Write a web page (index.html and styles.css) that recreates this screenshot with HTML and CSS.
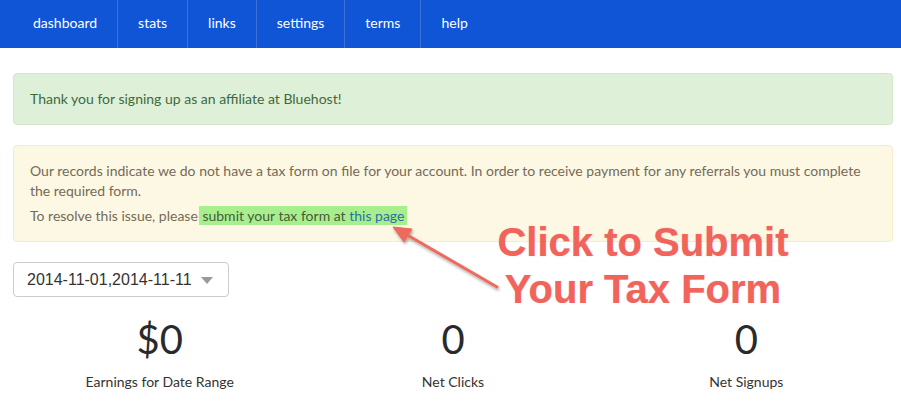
FILE: index.html
```html
<!DOCTYPE html>
<html lang="en">
<head>
    <meta charset="UTF-8">
    <title>Affiliate Dashboard</title>
    <link rel="stylesheet" href="styles.css">
</head>
<body>
    <nav class="topnav">
        <ul class="topnav__list">
            <li class="topnav__item"><a href="#">dashboard</a></li>
            <li class="topnav__item"><a href="#">stats</a></li>
            <li class="topnav__item"><a href="#">links</a></li>
            <li class="topnav__item"><a href="#">settings</a></li>
            <li class="topnav__item"><a href="#">terms</a></li>
            <li class="topnav__item topnav__item--last"><a href="#">help</a></li>
        </ul>
    </nav>

    <div class="page">
        <div class="alert alert--success">
            <p>Thank you for signing up as an affiliate at Bluehost!</p>
        </div>

        <div class="alert alert--warning">
            <p>Our records indicate we do not have a tax form on file for your account. In order to receive payment for any referrals you must complete the required form.</p>
            <p>To resolve this issue, please<span class="highlight"> submit your tax form at <a href="#" class="alert__link">this page</a></span></p>
        </div>

        <div class="range-select">
            <span class="range-select__value">2014-11-01,2014-11-11</span>
            <span class="range-select__caret"></span>
        </div>

        <div class="stats">
            <div class="stats__col">
                <div class="stats__num">$0</div>
                <div class="stats__label">Earnings for Date Range</div>
            </div>
            <div class="stats__col">
                <div class="stats__num">0</div>
                <div class="stats__label">Net Clicks</div>
            </div>
            <div class="stats__col">
                <div class="stats__num">0</div>
                <div class="stats__label">Net Signups</div>
            </div>
        </div>

        <!-- screenshot annotation -->
        <svg class="callout__arrow" width="130" height="80" viewBox="0 0 130 80">
            <defs>
                <filter id="arrowShadow" x="-20%" y="-20%" width="140%" height="140%">
                    <feDropShadow dx="1" dy="2" stdDeviation="1.5" flood-color="#000" flood-opacity="0.35"/>
                </filter>
            </defs>
            <g filter="url(#arrowShadow)" fill="#ee6a5c" stroke="#ee6a5c">
                <line x1="117" y1="68" x2="22" y2="13" stroke-width="3" stroke-linecap="round"/>
                <polygon points="13,8 32,10 24,23" stroke-width="1" stroke-linejoin="round"/>
            </g>
        </svg>
        <div class="callout__text">Click to Submit<br>Your Tax Form</div>
    </div>
</body>
</html>
```

FILE: styles.css
```css
* { box-sizing: border-box; }

*, html {
    padding: 0;
    margin: 0;
}

body {
    font-family: Lato, "Open Sans", sans-serif;
    font-size: 14px;
    color: #333;
    background: #fff;
}

a { text-decoration: none; }

.topnav {
    background: #1055d5;
    height: 48px;
}

.topnav__list {
    list-style: none;
    display: flex;
    height: 100%;
    padding-left: 13px;
}

.topnav__item {
    display: flex;
    align-items: center;
    padding: 0 20px;
    border-right: 1px solid #3d71da;
}

.topnav__item--last { border-right: none; }

.topnav__item a {
    color: #fff;
    font-size: 14px;
    line-height: 20px;
    padding-bottom: 2px;
}

.page {
    position: relative;
    padding: 25px 8px 0 13px;
}

.alert {
    border: 1px solid;
    border-radius: 4px;
    padding: 15px 16px;
    line-height: 20px;
}

.alert p + p { margin-top: 5px; }

.alert--success {
    background: #dff0d8;
    border-color: #d3e8c6;
    color: #3c6a3d;
    margin-bottom: 20px;
}

.alert--warning {
    background: #fcf8e3;
    border-color: #f8ebcc;
    color: #766a58;
    margin-bottom: 20px;
}

.highlight {
    background: #a6ef8c;
    padding: 1px 3px 1px 0;
    margin-left: 1px;
    color: #4a5a3a;
}

.alert__link { color: #2b6fa3; }

.range-select {
    display: flex;
    align-items: center;
    justify-content: space-between;
    width: 216px;
    height: 35px;
    padding: 0 15px 0 13px;
    border: 1px solid #ccc;
    border-radius: 4px;
    font-family: "Liberation Sans", Arial, sans-serif;
    font-size: 16px;
    color: #333;
}

.range-select__caret {
    width: 0;
    height: 0;
    border-left: 6px solid transparent;
    border-right: 6px solid transparent;
    border-top: 7px solid #999;
    margin-top: 1px;
}

.stats {
    display: grid;
    grid-template-columns: repeat(3, 1fr);
    text-align: center;
    margin-top: 20px;
}

.stats__num {
    font-size: 40px;
    line-height: 44px;
    color: #2a2a2a;
}

.stats__label {
    margin-top: 11px;
    font-size: 14px;
    line-height: 20px;
    color: #333;
}

.callout__text {
    position: absolute;
    left: 478px;
    top: 171px;
    width: 330px;
    text-align: center;
    font-family: "Liberation Sans", Arial, sans-serif;
    font-weight: bold;
    font-size: 40px;
    line-height: 47px;
    color: #f0645a;
    text-shadow: 0 0 1px rgba(240, 100, 150, 0.6);
}

.callout__arrow {
    position: absolute;
    left: 380px;
    top: 171px;
}
```
